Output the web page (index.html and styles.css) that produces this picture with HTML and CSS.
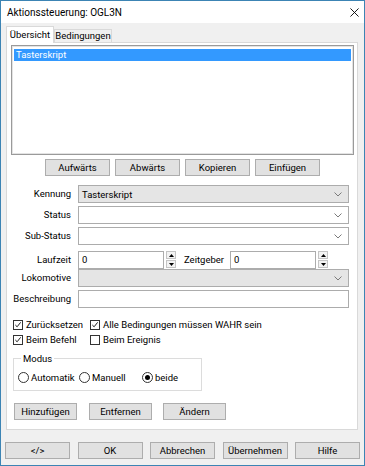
FILE: index.html
```html
<!DOCTYPE html>
<html lang="de">

<head>
    <meta charset="utf-8" />
    <title>Aktionssteuerung</title>
    <link rel="stylesheet" href="styles.css">
</head>

<body>
    <div class="window">
        <div class="titlebar">
            <span>Aktionssteuerung: OGL3N</span>
            <svg class="close" viewBox="0 0 10 10"><path d="M0.5 0.5L9.5 9.5M9.5 0.5L0.5 9.5" stroke="#000" stroke-width="1" /></svg>
        </div>

        <div class="tabs">
            <div class="tab active">Übersicht</div>
            <div class="tab">Bedingungen</div>
        </div>

        <div class="panel">
            <div class="list">
                <div class="item selected">Tasterskript</div>
            </div>

            <div class="list-buttons">
                <div class="btn">Aufwärts</div>
                <div class="btn">Abwärts</div>
                <div class="btn">Kopieren</div>
                <div class="btn">Einfügen</div>
            </div>

            <div class="form">
                <div class="label">Kennung</div>
                <div class="combo disabled"><span>Tasterskript</span><svg class="chevron" viewBox="0 0 8 5"><path d="M0.5 0.5L4 4L7.5 0.5" fill="none" stroke="#7a7a7a" /></svg></div>

                <div class="label">Status</div>
                <div class="combo"><span></span><svg class="chevron" viewBox="0 0 8 5"><path d="M0.5 0.5L4 4L7.5 0.5" fill="none" stroke="#7a7a7a" /></svg></div>

                <div class="label">Sub-Status</div>
                <div class="combo"><span></span><svg class="chevron" viewBox="0 0 8 5"><path d="M0.5 0.5L4 4L7.5 0.5" fill="none" stroke="#7a7a7a" /></svg></div>

                <div class="label gap">Laufzeit</div>
                <div class="timers gap">
                    <div class="textbox num">0</div>
                    <div class="spin">
                        <div class="spin-btn"><svg viewBox="0 0 5 3"><path d="M0 3L2.5 0L5 3Z" fill="#000" /></svg></div>
                        <div class="spin-btn"><svg viewBox="0 0 5 3"><path d="M0 0L2.5 3L5 0Z" fill="#000" /></svg></div>
                    </div>
                    <div class="inline-label">Zeitgeber</div>
                    <div class="textbox num">0</div>
                    <div class="spin">
                        <div class="spin-btn"><svg viewBox="0 0 5 3"><path d="M0 3L2.5 0L5 3Z" fill="#000" /></svg></div>
                        <div class="spin-btn"><svg viewBox="0 0 5 3"><path d="M0 0L2.5 3L5 0Z" fill="#000" /></svg></div>
                    </div>
                </div>

                <div class="label">Lokomotive</div>
                <div class="combo disabled"><span></span><svg class="chevron" viewBox="0 0 8 5"><path d="M0.5 0.5L4 4L7.5 0.5" fill="none" stroke="#7a7a7a" /></svg></div>

                <div class="label">Beschreibung</div>
                <div class="textbox"></div>
            </div>

            <div class="checks">
                <div class="check"><span class="box"><svg viewBox="0 0 9 9"><path d="M1.5 4.5L3.5 6.5L7.5 1.5" fill="none" stroke="#000" stroke-width="1" /></svg></span>Zurücksetzen</div>
                <div class="check"><span class="box"><svg viewBox="0 0 9 9"><path d="M1.5 4.5L3.5 6.5L7.5 1.5" fill="none" stroke="#000" stroke-width="1" /></svg></span>Alle Bedingungen müssen WAHR sein</div>
                <div class="check"><span class="box"><svg viewBox="0 0 9 9"><path d="M1.5 4.5L3.5 6.5L7.5 1.5" fill="none" stroke="#000" stroke-width="1" /></svg></span>Beim Befehl</div>
                <div class="check"><span class="box"></span>Beim Ereignis</div>
            </div>

            <fieldset class="modus">
                <legend>Modus</legend>
                <div class="radios">
                    <div class="radio r1"><span class="circle"></span>Automatik</div>
                    <div class="radio r2"><span class="circle"></span>Manuell</div>
                    <div class="radio"><span class="circle checked"></span>beide</div>
                </div>
            </fieldset>

            <div class="actions">
                <div class="btn">Hinzufügen</div>
                <div class="btn">Entfernen</div>
                <div class="btn">Ändern</div>
            </div>
        </div>

        <div class="footer">
            <div class="btn">&lt;/&gt;</div>
            <div class="btn">OK</div>
            <div class="btn">Abbrechen</div>
            <div class="btn">Übernehmen</div>
            <div class="btn">Hilfe</div>
        </div>
    </div>
</body>

</html>
```

FILE: styles.css
```css
* {
    box-sizing: border-box;
}

body {
    margin: 0;
    font-family: Roboto, "Liberation Sans", sans-serif;
    font-size: 9.5px;
    color: #000;
}

.window {
    width: 365px;
    height: 466px;
    border: 1px solid #3c84b4;
    background: #f0f0f0;
    display: flex;
    flex-direction: column;
}

.titlebar {
    height: 22px;
    background: #fff;
    display: flex;
    align-items: center;
    justify-content: space-between;
    padding: 0 5px 0 6px;
    font-size: 10px;
}

.close {
    width: 9px;
    height: 9px;
}

.tabs {
    display: flex;
    align-items: flex-end;
    height: 20px;
    padding-left: 5px;
    margin-bottom: -1px;
}

.tab {
    height: 14px;
    line-height: 12px;
    width: 58px;
    text-align: center;
    border: 1px solid #d9d9d9;
    border-bottom: none;
    background: #f0f0f0;
}

.tab.active {
    height: 17px;
    width: 48px;
    line-height: 15px;
    background: #fff;
    position: relative;
    z-index: 1;
}

.panel {
    margin: 0 6px 0 5px;
    height: 388px;
    background: #fff;
    border: 1px solid #d9d9d9;
    padding: 2px 3px 0 4px;
    display: flex;
    flex-direction: column;
}

.list {
    height: 110px;
    border: 1px solid #9a9a9a;
    box-shadow: inset 0 0 0 1px #e3e3e3;
    padding: 3px 2px;
}

.item {
    height: 12px;
    line-height: 12px;
    padding-left: 2px;
}

.item.selected {
    background: #3399ff;
    color: #fff;
}

.btn {
    width: 65px;
    height: 17px;
    line-height: 15px;
    text-align: center;
    background: #e1e1e1;
    border: 1px solid #adadad;
}

.list-buttons {
    display: flex;
    justify-content: center;
    gap: 5px;
    margin-top: 4px;
}

.form {
    display: grid;
    grid-template-columns: 60px 1fr;
    column-gap: 7px;
    row-gap: 3px;
    grid-auto-rows: 18px;
    margin: 9px 5px 0 0;
}

.label {
    text-align: right;
    line-height: 18px;
}

.gap {
    margin-top: 3px;
}

.combo {
    display: flex;
    align-items: center;
    justify-content: space-between;
    border: 1px solid #acacac;
    background: #fff;
    padding: 0 6px 0 3px;
}

.combo.disabled {
    background: #e5e5e5;
}

.chevron {
    width: 8px;
    height: 5px;
}

.textbox {
    border: 1px solid #acacac;
    background: #fff;
    height: 18px;
    line-height: 16px;
    padding-left: 3px;
}

.timers {
    display: flex;
    align-items: flex-start;
}

.textbox.num {
    width: 86px;
}

.spin {
    display: flex;
    flex-direction: column;
    gap: 1px;
    margin-left: 2px;
}

.spin-btn {
    width: 10px;
    height: 8px;
    border: 1px solid #c4c4c4;
    background: #f3f3f3;
    display: flex;
    align-items: center;
    justify-content: center;
}

.spin-btn svg {
    width: 5px;
    height: 3px;
}

.inline-label {
    line-height: 18px;
    margin: 0 6px 0 8px;
}

.checks {
    display: grid;
    grid-template-columns: 77px 1fr;
    grid-auto-rows: 15px;
    margin: 9px 0 0 2px;
}

.check {
    display: flex;
    align-items: center;
    gap: 3px;
}

.box {
    width: 10px;
    height: 10px;
    border: 1px solid #333;
    background: #fff;
    display: flex;
}

.box svg {
    width: 8px;
    height: 8px;
}

.modus {
    margin: 6px 0 0 2px;
    width: 189px;
    border: 1px solid #dcdcdc;
    padding: 0 0 7px 4px;
}

.modus legend {
    padding: 0 2px;
    margin-left: 3px;
}

.radios {
    display: flex;
    margin-top: 8px;
}

.radio {
    display: flex;
    align-items: center;
    gap: 2px;
}

.radio.r1 {
    width: 61px;
}

.radio.r2 {
    width: 63px;
}

.circle {
    width: 11px;
    height: 11px;
    border: 1px solid #333;
    border-radius: 50%;
    background: #fff;
    display: flex;
    align-items: center;
    justify-content: center;
}

.circle.checked::after {
    content: "";
    width: 5px;
    height: 5px;
    border-radius: 50%;
    background: #000;
}

.actions {
    display: flex;
    margin: 12px 0 0 3px;
}

.actions .btn {
    width: 63px;
    margin-right: 12px;
}

.actions .btn + .btn {
    margin-right: 11px;
}

.footer {
    display: flex;
    justify-content: space-between;
    padding: 0 4px;
    margin-top: 12px;
}
```
